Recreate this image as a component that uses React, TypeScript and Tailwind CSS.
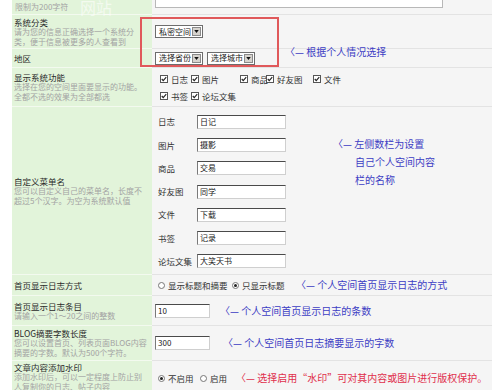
import React from 'react';

type Opt = { label: string; w: string };

function Check({ label, w }: Opt) {
  return (
    <span className={`flex shrink-0 items-center gap-[3px] whitespace-nowrap ${w}`}>
      <span className="flex h-[8px] w-[8px] shrink-0 items-center justify-center border border-[#555] bg-white">
        <svg viewBox="0 0 8 8" className="h-[6px] w-[6px]">
          <path d="M1 4 L3 6.2 L7 1.5" fill="none" stroke="#222" strokeWidth="1.5" />
        </svg>
      </span>
      <span>{label}</span>
    </span>
  );
}

function Radio({ label, on }: { label: string; on?: boolean }) {
  return (
    <span className="flex items-center gap-[3px] whitespace-nowrap">
      <span className="flex h-[7px] w-[7px] items-center justify-center rounded-full border border-[#777] bg-white">
        {on && <span className="h-[3px] w-[3px] rounded-full bg-[#222]" />}
      </span>
      <span>{label}</span>
    </span>
  );
}

function Select({ label, w }: Opt) {
  return (
    <span className={`flex h-[13px] items-center border border-[#6d6d6d] bg-white ${w}`}>
      <span className="flex-1 whitespace-nowrap pl-[3px] text-[8px] leading-none text-[#222]">{label}</span>
      <span className="mr-[1px] flex h-[9px] w-[9px] items-center justify-center border border-[#8a8a8a] bg-[#d6d3ce]">
        <svg viewBox="0 0 6 4" className="h-[3px] w-[5px]">
          <path d="M0 0h6L3 4z" fill="#111" />
        </svg>
      </span>
    </span>
  );
}

function TextBox({ value, w }: { value: string; w: string }) {
  return (
    <span className={`flex h-[14px] items-center border border-[#cfcfcf] border-t-[#4a4a4a] border-l-[#7a7a7a] bg-white pl-[2px] text-[8px] leading-none text-[#222] ${w}`}>
      {value}
    </span>
  );
}

const menuNames = [
  ['日志', '日记'],
  ['图片', '摄影'],
  ['商品', '交易'],
  ['好友图', '同学'],
  ['文件', '下载'],
  ['书签', '记录'],
  ['论坛文集', '大笑天书'],
];

function Label({ title, lines }: { title: string; lines?: string[] }) {
  return (
    <div className="pl-[2px] leading-[10px]">
      <div className="text-[8.5px] text-[#2a2a2a]">{title}</div>
      {lines?.map((l) => (
        <div key={l} className="whitespace-nowrap text-[8px] text-[#a3a3a3]">{l}</div>
      ))}
    </div>
  );
}

const Note = ({ children }: { children: React.ReactNode }) => (
  <span className="whitespace-nowrap text-[10px] leading-[12px] text-[#3d3dc4]">{children}</span>
);

export default function App() {
  return (
    <div className="relative h-[390px] w-[500px] overflow-hidden bg-white font-['Noto_Sans_CJK_SC','Noto_Sans',sans-serif]">
      <div className="ml-[12px] flex w-[480px] flex-col">
        {/* partial top row */}
        <div className="flex h-[15px]">
          <div className="flex w-[140px] items-center border-b border-[#f3faef] bg-[#e2f4da] pl-[3px] text-[8px] text-[#a3a3a3]">
            限制为200字符
          </div>
          <div className="flex-1 border-b border-[#e3e3e3] bg-[#f5f5f5] pl-[3px]">
            <div className="h-[8px] w-[288px] border border-t-0 border-[#b8b8b8] bg-white" />
          </div>
        </div>

        {/* 系统分类 */}
        <div className="flex h-[34px]">
          <div className="flex w-[140px] items-center border-b border-[#f3faef] bg-[#e2f4da]">
            <Label title="系统分类" lines={['请为您的信息正确选择一个系统分', '类，便于信息被更多的人查看到']} />
          </div>
          <div className="flex flex-1 items-center border-b border-[#e3e3e3] bg-[#f5f5f5] pl-[3px]">
            <Select label="私密空间" w="w-[48px]" />
          </div>
        </div>

        {/* 地区 */}
        <div className="flex h-[19px]">
          <div className="flex w-[140px] items-center border-b border-[#f3faef] bg-[#e2f4da]">
            <Label title="地区" />
          </div>
          <div className="flex flex-1 items-center gap-[4px] border-b border-[#e3e3e3] bg-[#f5f5f5] pl-[3px]">
            <Select label="选择省份" w="w-[48px]" />
            <Select label="选择城市" w="w-[48px]" />
          </div>
        </div>

        {/* 显示系统功能 */}
        <div className="flex h-[39px]">
          <div className="flex w-[140px] items-center border-b border-[#f3faef] bg-[#e2f4da]">
            <Label title="显示系统功能" lines={['选择在您的空间里面要显示的功能。', '全都不选的效果为全部都选']} />
          </div>
          <div className="flex flex-1 flex-col justify-center gap-[7px] border-b border-[#e3e3e3] bg-[#f5f5f5] pl-[8px] text-[8.5px] leading-[10px] text-[#333]">
            <div className="flex">
              <Check label="日志" w="w-[31px]" />
              <Check label="图片" w="w-[49px]" />
              <Check label="商品" w="w-[26px]" />
              <Check label="好友图" w="w-[47px]" />
              <Check label="文件" w="w-[30px]" />
            </div>
            <div className="flex">
              <Check label="书签" w="w-[31px]" />
              <Check label="论坛文集" w="w-[60px]" />
            </div>
          </div>
        </div>

        {/* 自定义菜单名 */}
        <div className="flex h-[168px]">
          <div className="flex w-[140px] items-center border-b border-[#f3faef] bg-[#e2f4da]">
            <Label title="自定义菜单名" lines={['您可以自定义自己的菜单名，长度不', '超过5个汉字。为空为系统默认值']} />
          </div>
          <div className="flex flex-1 border-b border-[#e3e3e3] bg-[#f5f5f5]">
            <div className="flex w-[140px] flex-col pl-[6px] pt-[3px] text-[8.5px] text-[#333]">
              {menuNames.map(([k, v]) => (
                <div key={k} className="flex h-[23.3px] items-center">
                  <span className="w-[39px] whitespace-nowrap">{k}</span>
                  <TextBox value={v} w="w-[89px]" />
                </div>
              ))}
            </div>
            <div className="ml-[41px] mt-[31px] flex flex-col leading-[18px]">
              <Note>〈— 左侧数栏为设置</Note>
              <div className="pl-[22px]"><Note>自己个人空间内容</Note></div>
              <div className="pl-[22px]"><Note>栏的名称</Note></div>
            </div>
          </div>
        </div>

        {/* 首页显示日志方式 */}
        <div className="flex h-[21px]">
          <div className="flex w-[140px] items-center border-b border-[#f3faef] bg-[#e2f4da]">
            <Label title="首页显示日志方式" />
          </div>
          <div className="flex flex-1 items-center border-b border-[#e3e3e3] bg-[#f5f5f5] pl-[6px] text-[8.5px] text-[#333]">
            <div className="flex w-[74px]"><Radio label="显示标题和摘要" /></div>
            <div className="flex w-[64px]"><Radio label="只显示标题" on /></div>
            <Note>〈— 个人空间首页显示日志的方式</Note>
          </div>
        </div>

        {/* 首页显示日志条目 */}
        <div className="flex h-[30px]">
          <div className="flex w-[140px] items-center border-b border-[#f3faef] bg-[#e2f4da]">
            <Label title="首页显示日志条目" lines={['请输入一个1～20之间的整数']} />
          </div>
          <div className="flex flex-1 items-center gap-[10px] border-b border-[#e3e3e3] bg-[#f5f5f5] pl-[3px]">
            <TextBox value="10" w="w-[55px]" />
            <Note>〈— 个人空间首页显示日志的条数</Note>
          </div>
        </div>

        {/* BLOG摘要字数长度 */}
        <div className="flex h-[35px]">
          <div className="flex w-[140px] items-center border-b border-[#f3faef] bg-[#e2f4da]">
            <Label title="BLOG摘要字数长度" lines={['您可以设置首页、列表页面BLOG内容', '摘要的字数。默认为500个字符。']} />
          </div>
          <div className="flex flex-1 items-center gap-[13px] border-b border-[#e3e3e3] bg-[#f5f5f5] pl-[3px]">
            <TextBox value="300" w="w-[55px]" />
            <Note>〈— 个人空间首页日志摘要显示的字数</Note>
          </div>
        </div>

        {/* 文章内容添加水印 */}
        <div className="flex h-[34px]">
          <div className="flex w-[140px] items-start bg-[#e2f4da] pt-[1px]">
            <Label title="文章内容添加水印" lines={['添加水印后，可以一定程度上防止别', '人复制你的日志、帖子内容']} />
          </div>
          <div className="flex flex-1 items-start bg-[#f5f5f5] pl-[6px] pt-[11px] text-[8.5px] text-[#333]">
            <div className="flex w-[42px]"><Radio label="不启用" on /></div>
            <div className="flex w-[36px]"><Radio label="启用" /></div>
            <span className="whitespace-nowrap text-[10px] leading-[12px] text-[#e0304c]">〈— 选择启用“水印”可对其内容或图片进行版权保护。</span>
          </div>
        </div>
      </div>

      {/* overlays */}
      <div className="pointer-events-none absolute left-[140px] top-[17px] h-[50px] w-[139px] border-2 border-[#e0595b]" />
      <div className="absolute left-[285px] top-[37px]">
        <Note>〈— 根据个人情况选择</Note>
      </div>
      <div className="pointer-events-none absolute left-[80px] top-[-2px] text-[16px] leading-[18px] text-white/60">网站</div>
    </div>
  );
}
